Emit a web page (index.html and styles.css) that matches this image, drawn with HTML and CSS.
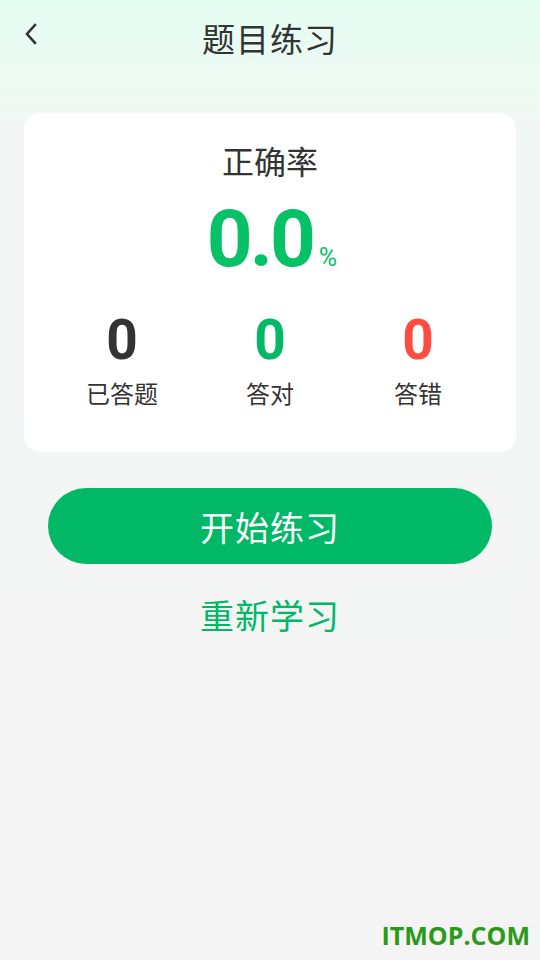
FILE: index.html
```html
<!DOCTYPE html>
<html lang="zh">
<head>
<meta charset="utf-8">
<link rel="stylesheet" href="styles.css">
</head>
<body>
<div class="page">
  <header class="nav">
    <span class="back"><svg width="14" height="22" viewBox="0 0 14 22"><path d="M11 2 L3 11 L11 20" fill="none" stroke="#333" stroke-width="2.6" stroke-linecap="square"/></svg></span>
    <h1 class="title">题目练习</h1>
  </header>
  <section class="card">
    <div class="rate-label">正确率</div>
    <div class="rate"><span class="rate-num">0.0</span><span class="rate-pct">%</span></div>
    <div class="stats">
      <div class="stat"><div class="num dark">0</div><div class="lbl">已答题</div></div>
      <div class="stat"><div class="num green">0</div><div class="lbl">答对</div></div>
      <div class="stat"><div class="num red">0</div><div class="lbl">答错</div></div>
    </div>
  </section>
  <button class="start">开始练习</button>
  <div class="restart">重新学习</div>
  <div class="watermark">ITMOP.COM</div>
</div>
</body>
</html>
```
FILE: styles.css
```css
html, body { margin: 0; padding: 0; }
body {
  width: 540px; height: 960px; overflow: hidden;
  font-family: "Noto Sans CJK SC", "Noto Sans", sans-serif;
  background: linear-gradient(180deg, #e3fdf1 0px, #eefaf4 80px, #f4f5f5 160px, #f4f4f4 100%);
  color: #333;
}
.page { position: relative; height: 960px; display: flex; flex-direction: column; align-items: center; }
.nav { position: relative; width: 100%; height: 78px; display: flex; justify-content: center; align-items: flex-start; }
.back { position: absolute; left: 24px; top: 23px; }
.title { margin: 13px 0 0; font-size: 33px; font-weight: 400; line-height: 50px; color: #333; letter-spacing: 1px; }
.card {
  margin-top: 35px; width: 492px; height: 339px; background: #fff; border-radius: 16px;
  display: flex; flex-direction: column; align-items: center; box-sizing: border-box;
}
.rate-label { margin-top: 23px; font-size: 32px; line-height: 48px; color: #333; }
.rate { margin-top: 12px; display: flex; align-items: baseline; margin-left: 4px; }
.rate-num { font-family: Roboto, sans-serif; font-weight: 700; font-size: 80px; line-height: 86px; color: #07c167; letter-spacing: -3px; }
.rate-pct { font-family: Roboto, sans-serif; font-size: 25px; color: #07c167; margin-left: 6px; }
.stats { margin-top: 26px; width: 100%; display: grid; grid-template-columns: 148px 148px 148px; justify-content: center; }
.stat { display: flex; flex-direction: column; align-items: center; }
.num { font-family: Roboto, sans-serif; font-weight: 700; font-size: 55px; line-height: 64px; }
.dark { color: #333; }
.green { color: #05b866; }
.red { color: #ff4c40; }
.lbl { font-size: 24px; line-height: 36px; margin-top: 3px; color: #333; }
.start {
  margin-top: 36px; width: 444px; height: 76px; border: none; border-radius: 38px; background: #00b865;
  color: #fff; font-family: "Noto Sans CJK SC", sans-serif; font-size: 34px; letter-spacing: 1px; padding: 0;
}
.restart { margin-top: 26px; font-size: 34px; line-height: 50px; color: #00b865; letter-spacing: 1px; }
.watermark {
  position: absolute; right: 10px; bottom: 8px; font-family: "Open Sans", "DejaVu Sans", sans-serif; font-weight: 700;
  font-size: 25px; color: #2a9a18; letter-spacing: 0;
}
```
